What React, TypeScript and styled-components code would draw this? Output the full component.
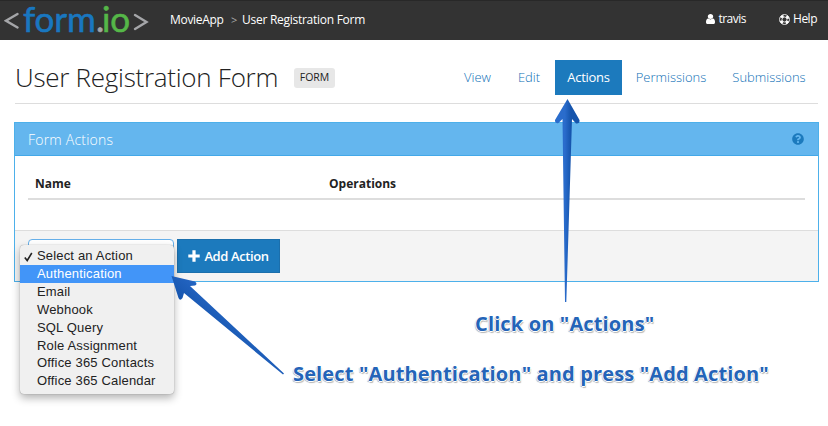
import React from "react";
import styled, { createGlobalStyle } from "styled-components";
import { FaQuestionCircle } from "react-icons/fa";

const Global = createGlobalStyle`
  * { box-sizing: border-box; }
  body { margin: 0; background: #fff; font-family: "Open Sans", sans-serif; color: #222; overflow: hidden; }
  svg { display: block; flex: none; }
`;

const Page = styled.div`
  position: relative;
  width: 828px;
  height: 426px;
  background: #fff;
`;

const TopBar = styled.header`
  display: flex;
  height: 40px;
  background: #333;
  border-top: 1px solid #282828;
  color: #fff;
  font-size: 12px;
  line-height: 16px;
`;

const Crumbs = styled.nav`
  display: flex;
  margin: 11px 0 0 20px;
`;

const Crumb = styled.span<{ $width: number; $spacing?: number }>`
  width: ${(p) => p.$width}px;
  white-space: nowrap;
  letter-spacing: ${(p) => p.$spacing ?? 0}px;
`;

const Divider = styled.span`
  width: 11px;
  color: #aaa;
  font-size: 11px;
`;

const UserLinks = styled.div`
  display: flex;
  margin: 10px 11px 0 auto;
  gap: 33px;
`;

const IconLink = styled.a<{ $gap: number }>`
  display: flex;
  align-items: center;
  gap: ${(p) => p.$gap}px;
  height: 16px;
  letter-spacing: -0.5px;
`;

const TitleRow = styled.div`
  display: flex;
  height: 64px;
  margin: 0 10px 0 15px;
  border-bottom: 1px solid #ddd;
`;

const Title = styled.h1`
  margin: 19px 0 0;
  width: 279px;
  font-size: 26px;
  font-weight: 300;
  line-height: 36px;
  letter-spacing: -0.27px;
  white-space: nowrap;
`;

const Tag = styled.span`
  width: 41px;
  height: 20px;
  margin-top: 28px;
  border-radius: 3px;
  background: #e7e7e7;
  font-size: 10.5px;
  line-height: 19px;
  text-align: center;
`;

const Tabs = styled.nav`
  display: flex;
  margin: 20px 0 0 auto;
`;

const Tab = styled.a<{ $width: number; $active?: boolean }>`
  width: ${(p) => p.$width}px;
  height: 35px;
  text-align: center;
  font-size: 13px;
  line-height: 34px;
  font-weight: ${(p) => (p.$active ? 400 : 300)};
  letter-spacing: ${(p) => (p.$active ? "-0.25px" : "0")};
  color: ${(p) => (p.$active ? "#fff" : "#0f70b6")};
  background: ${(p) => (p.$active ? "#1c7abd" : "transparent")};
`;

const Panel = styled.section`
  height: 160px;
  margin: 18px 9px 0 14px;
  border: 1px solid #4db0ea;
`;

const PanelHead = styled.div`
  display: flex;
  align-items: center;
  justify-content: space-between;
  height: 33px;
  padding: 0 14px 0 13px;
  border-bottom: 1px solid #43a8e8;
  background: #64b6ee;
  color: #fff;
  font-size: 14px;
  font-weight: 300;
  letter-spacing: 0.22px;
`;

const PanelBody = styled.div`
  height: 74px;
  padding: 13px 13px 0;
`;

const TableHead = styled.div`
  display: grid;
  grid-template-columns: 294px 1fr;
  height: 31px;
  padding: 6px 7px 0;
  border-bottom: 2px solid #ddd;
  font-size: 12px;
  font-weight: 700;
  line-height: 18px;
`;

const PanelFoot = styled.div`
  display: flex;
  gap: 3px;
  height: 51px;
  padding: 8px 13px 0;
  border-top: 1px solid #ddd;
  background: #f4f4f4;
`;

const SelectBox = styled.div`
  width: 146px;
  height: 34px;
  border: 1px solid #66afe9;
  border-radius: 4px;
  background: #fff;
`;

const AddButton = styled.button`
  display: flex;
  align-items: center;
  justify-content: center;
  gap: 4px;
  width: 103px;
  height: 34px;
  padding: 0;
  border: 1px solid #1b6fac;
  background: #1c7abd;
  color: #fff;
  font: 600 13px "Open Sans", sans-serif;
  letter-spacing: -0.4px;
  white-space: nowrap;
`;

const Menu = styled.div`
  position: absolute;
  left: 20px;
  top: 245px;
  width: 154px;
  height: 149px;
  padding-top: 2px;
  border-radius: 4px;
  background: #f0f0f0;
  box-shadow: 0 0 1px rgba(0, 0, 0, 0.45), 0 4px 9px rgba(0, 0, 0, 0.3);
  font: 13px "Liberation Sans", Arial, sans-serif;
  letter-spacing: 0.17px;
`;

const Option = styled.div<{ $active?: boolean }>`
  display: flex;
  align-items: center;
  height: 17.85px;
  line-height: 17px;
  color: ${(p) => (p.$active ? "#fff" : "#222")};
  background: ${(p) => (p.$active ? "#4295f8" : "transparent")};
`;

const Check = styled.span`
  width: 17px;
  padding: 2px 0 0 4px;
`;

const Note = styled.p<{ $left: number; $top: number }>`
  position: absolute;
  left: ${(p) => p.$left}px;
  top: ${(p) => p.$top}px;
  margin: 0;
  color: #2464b8;
  font: 700 20px/26px "Open Sans", sans-serif;
  letter-spacing: 0.14px;
  white-space: nowrap;
  text-shadow: -1px 0 #fff, 1px 0 #fff, 0 1px #fff, -1px 1px 1px #999, 1px 2px 1px #bbb;
`;

const Arrows = styled.svg`
  position: absolute;
  left: 0;
  top: 0;
`;

const LogoMark = styled.div`
  display: flex;
  width: 150px;
  height: 39px;
  padding-left: 4px;
`;

const LogoWord = styled.span<{ $width: number; $color: string; $spacing: number }>`
  width: ${(p) => p.$width}px;
  height: 39px;
  color: ${(p) => p.$color};
  font-family: Lato, sans-serif;
  font-size: 35px;
  line-height: 34px;
  letter-spacing: ${(p) => p.$spacing}px;
  -webkit-text-stroke: 0.6px ${(p) => p.$color};
  white-space: nowrap;
`;

const Logo = () => (
  <LogoMark>
    <svg width="19" height="39" viewBox="4 1 19 39" fill="none" stroke="#a5a6a9" strokeWidth="2.4" strokeLinecap="round">
      <path d="M17.500 14 6 20.700 17.500 27.500" />
    </svg>
    <LogoWord $width={73} $color="#1977c0" $spacing={-0.1}>form</LogoWord>
    <LogoWord $width={6} $color="#a5a6a9" $spacing={-3}>.</LogoWord>
    <LogoWord $width={29} $color="#55b748" $spacing={-0.1}>io</LogoWord>
    <svg width="18" height="39" viewBox="131 1 18 39" fill="none" stroke="#a5a6a9" strokeWidth="2.4" strokeLinecap="round">
      <path d="M135 15 146.500 22 135 29" />
    </svg>
  </LogoMark>
);

const UserIcon = () => (
  <svg width="9" height="10" viewBox="0 128 1280 1536" preserveAspectRatio="none" fill="currentColor">
    <path d="M1280 1399q0 109-62.500 187t-150.500 78H213q-88 0-150.500-78T0 1399q0-85 8.500-160.500t31.500-152T98.500 955t94-89T327 832q131 128 313 128t313-128q76 0 134.500 34.500t94 89t58.500 131.500t31.500 152t8.500 160.500zM1024 512q0 159-112.500 271.500T640 896T368.500 783.500T256 512t112.500-271.500T640 128t271.500 112.500T1024 512z" />
  </svg>
);

const HelpIcon = () => (
  <svg width="11" height="11" viewBox="0 0 22 22" fill="none" stroke="currentColor">
    <circle cx="11" cy="11" r="10" strokeWidth="1.600" />
    <circle cx="11" cy="11" r="5" strokeWidth="1.600" />
    <circle cx="11" cy="11" r="7.500" strokeWidth="5" strokeDasharray="5.890 5.890" strokeDashoffset="-2.945" />
  </svg>
);

const PlusIcon = () => (
  <svg width="12" height="12" viewBox="0 0 12 12" fill="none" stroke="currentColor" strokeWidth="3.200">
    <path d="M6 .3v11.400M.3 6h11.400" />
  </svg>
);

const CheckIcon = () => (
  <svg width="9" height="10" viewBox="0 0 9 10" fill="none" stroke="#222">
    <path d="M.8 5.500 3.200 8.500 7.800 1" strokeWidth="1.600" />
  </svg>
);

const options = [
  "Select an Action",
  "Authentication",
  "Email",
  "Webhook",
  "SQL Query",
  "Role Assignment",
  "Office 365 Contacts",
  "Office 365 Calendar",
];

export default function App() {
  return (
    <Page>
      <Global />
      <TopBar>
        <Logo />
        <Crumbs>
          <Crumb $width={61} $spacing={-0.3}>MovieApp</Crumb>
          <Divider>&gt;</Divider>
          <Crumb $width={124} $spacing={-0.27}>User Registration Form</Crumb>
        </Crumbs>
        <UserLinks>
          <IconLink $gap={3}><UserIcon />travis</IconLink>
          <IconLink $gap={3}><HelpIcon />Help</IconLink>
        </UserLinks>
      </TopBar>
      <TitleRow>
        <Title>User Registration Form</Title>
        <Tag>FORM</Tag>
        <Tabs>
          <Tab $width={51}>View</Tab>
          <Tab $width={52}>Edit</Tab>
          <Tab $width={67} $active>Actions</Tab>
          <Tab $width={98}>Permissions</Tab>
          <Tab $width={98}>Submissions</Tab>
        </Tabs>
      </TitleRow>
      <Panel>
        <PanelHead>
          Form Actions
          <FaQuestionCircle size={12} color="#1c7abd" />
        </PanelHead>
        <PanelBody>
          <TableHead>
            <span>Name</span>
            <span>Operations</span>
          </TableHead>
        </PanelBody>
        <PanelFoot>
          <SelectBox />
          <AddButton><PlusIcon />Add Action</AddButton>
        </PanelFoot>
      </Panel>
      <Menu>
        {options.map((label, i) => (
          <Option key={label} $active={i === 1}>
            <Check>{i === 0 && <CheckIcon />}</Check>
            {label}
          </Option>
        ))}
      </Menu>
      <Arrows width="828" height="426">
        <defs>
          <linearGradient id="up" x1="0" x2="1">
            <stop offset=".4" stopColor="#2a6ccc" />
            <stop offset=".65" stopColor="#1554ac" />
          </linearGradient>
          <linearGradient id="diag" x1="1" y1="0" x2="0" y2="1">
            <stop offset=".35" stopColor="#2a6ccc" />
            <stop offset=".6" stopColor="#1554ac" />
          </linearGradient>
        </defs>
        <path fill="url(#up)" d="M567.500 99 579.500 120Q580 124 576 123.500L572 119 566.300 302H565L562.500 119 558.500 123Q554.500 124 555 120Z" />
        <path fill="url(#diag)" d="M171.500 276 195 281.500Q198 284 195 285.500L190 286 284 373.500 283 374.500 184 293 182.500 298Q180 301.500 178.500 298Z" />
      </Arrows>
      <Note $left={475} $top={311}>Click on "Actions"</Note>
      <Note $left={293} $top={361}>Select "Authentication" and press "Add Action"</Note>
    </Page>
  );
}
